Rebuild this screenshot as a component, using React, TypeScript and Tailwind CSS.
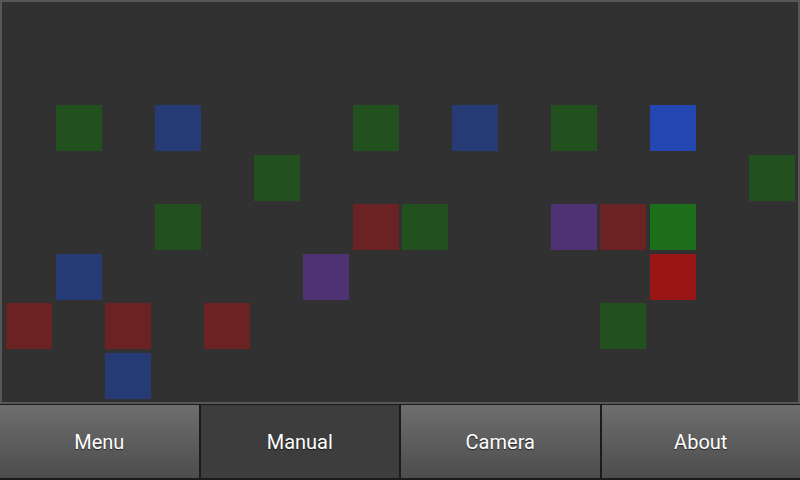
import React from "react";

type Cell = { r: number; c: number; color: string };

const G = "bg-[#22501f]";
const B = "bg-[#263b75]";
const R = "bg-[#6b2222]";
const P = "bg-[#4f3273]";
const BB = "bg-[#2346b0]";
const BG = "bg-[#1c6e1a]";
const BR = "bg-[#9a1616]";

const cells: Cell[] = [
  { r: 2, c: 1, color: G },
  { r: 2, c: 3, color: B },
  { r: 2, c: 7, color: G },
  { r: 2, c: 9, color: B },
  { r: 2, c: 11, color: G },
  { r: 2, c: 13, color: BB },
  { r: 3, c: 5, color: G },
  { r: 3, c: 15, color: G },
  { r: 4, c: 3, color: G },
  { r: 4, c: 7, color: R },
  { r: 4, c: 8, color: G },
  { r: 4, c: 11, color: P },
  { r: 4, c: 12, color: R },
  { r: 4, c: 13, color: BG },
  { r: 5, c: 1, color: B },
  { r: 5, c: 6, color: P },
  { r: 5, c: 13, color: BR },
  { r: 6, c: 0, color: R },
  { r: 6, c: 2, color: R },
  { r: 6, c: 4, color: R },
  { r: 6, c: 12, color: G },
  { r: 7, c: 2, color: B },
];

export default function App() {
  const all: React.ReactNode[] = [];
  for (let r = 0; r < 8; r++) {
    for (let c = 0; c < 16; c++) {
      const cell = cells.find((x) => x.r === r && x.c === c);
      all.push(
        <div key={`${r}-${c}`} className={`w-[46px] h-[46px] ${cell ? cell.color : ""}`} />
      );
    }
  }
  const btnBase =
    "flex-1 h-full flex items-center justify-center text-white text-[20px] [text-shadow:0_1px_1px_rgba(0,0,0,0.6)]";
  return (
    <div
      className="w-[800px] h-[480px] bg-[#1b1b1b] flex flex-col overflow-hidden"
      style={{ fontFamily: "Roboto, 'Noto Sans', sans-serif" }}
    >
      <div className="h-[404px] bg-[#323131] border-2 border-[#575757] pt-[4px] pl-[4px] box-border">
        <div className="grid grid-cols-[repeat(16,46px)] grid-rows-[repeat(8,46px)] gap-x-[3.53px] gap-y-[3.5px]">
          {all}
        </div>
      </div>
      <div className="h-[73px] mt-[1px] flex gap-[2px]">
        <div className={`${btnBase} bg-gradient-to-b from-[#6f6e6e] to-[#4d4d4d]`}>Menu</div>
        <div className={`${btnBase} bg-[#3d3d3d]`}>Manual</div>
        <div className={`${btnBase} bg-gradient-to-b from-[#6f6e6e] to-[#4d4d4d]`}>Camera</div>
        <div className={`${btnBase} bg-gradient-to-b from-[#6f6e6e] to-[#4d4d4d]`}>About</div>
      </div>
    </div>
  );
}
